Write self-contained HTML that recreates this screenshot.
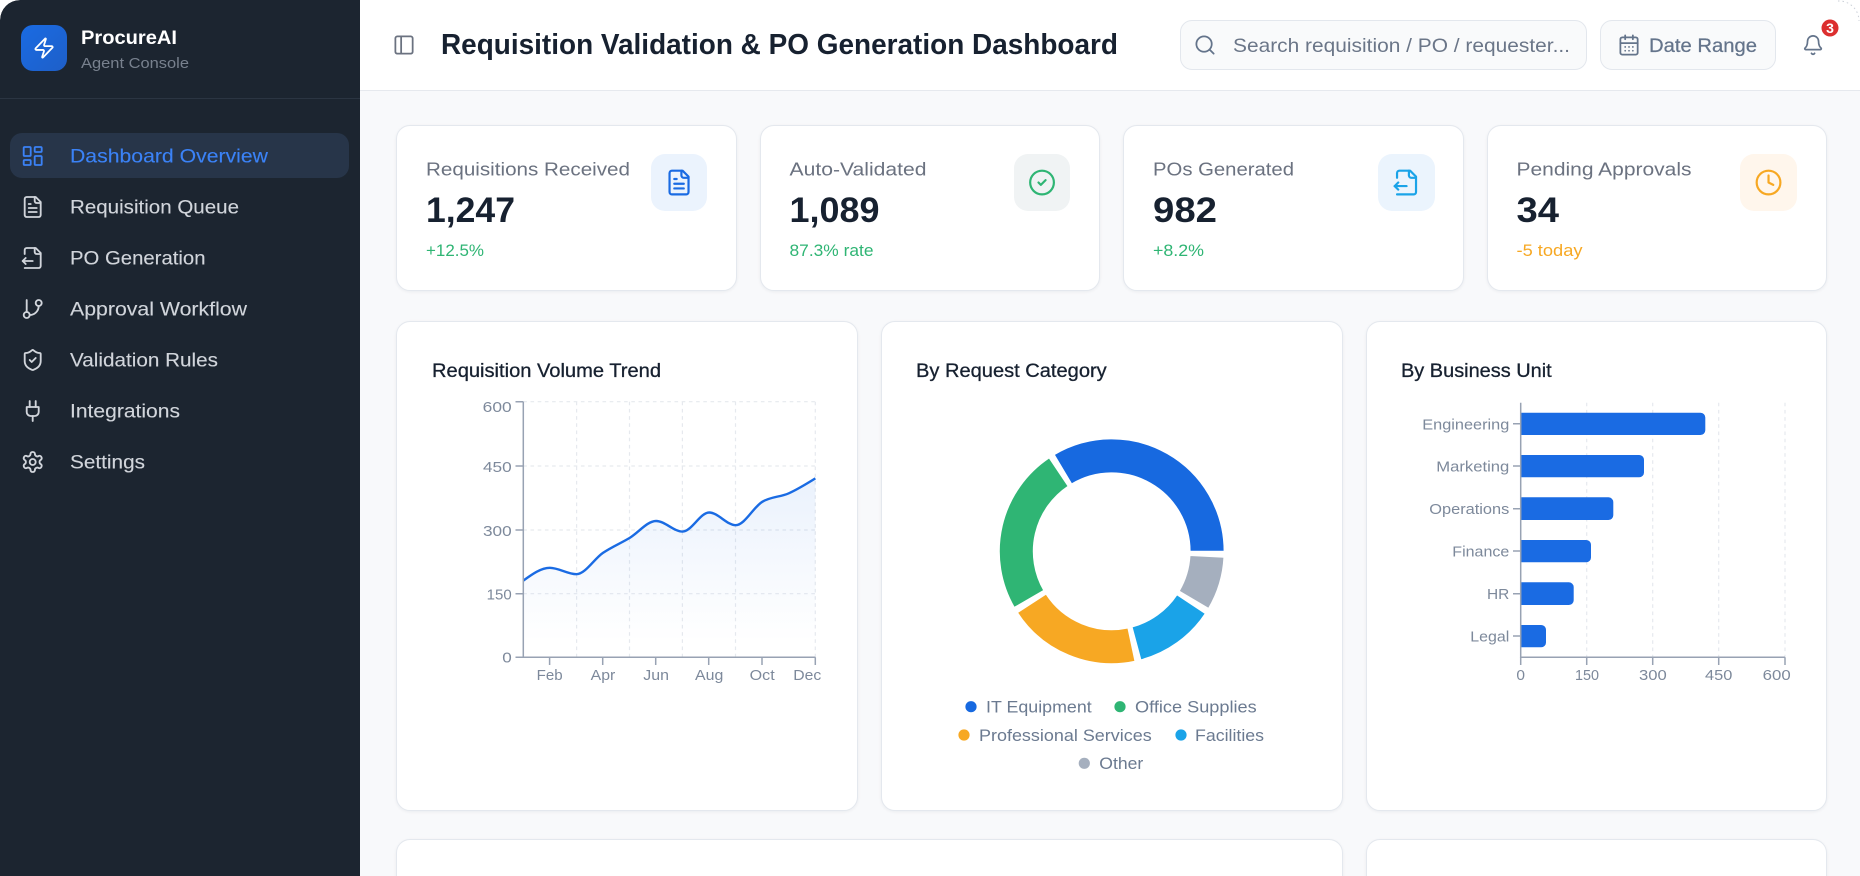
<!DOCTYPE html>
<html lang="en">
<head>
<meta charset="utf-8">
<title>ProcureAI Dashboard</title>
<style>
html,body{margin:0;padding:0;background:#fff}
body{width:1860px;height:876px;overflow:hidden;position:relative;font-family:"Liberation Sans",sans-serif}
.abs{position:absolute}
#main{left:0;top:0;width:1860px;height:876px;background:#f8f9fb;border-radius:20px 20px 0 0;overflow:hidden;filter:blur(.35px)}
#side{left:0;top:0;width:360px;height:876px;background:#1c2530;border-top-left-radius:20px}
#side .rule{position:absolute;left:0;top:98px;width:360px;height:1px;background:#2b3542}
#logo{left:21px;top:25px;width:46px;height:46px;border-radius:12px;background:linear-gradient(135deg,#1a6be3,#1e5fc8)}
#active{left:10px;top:133px;width:339px;height:45px;border-radius:12px;background:#273549}
#head{left:360px;top:0;width:1500px;height:89.5px;background:#fff;border-bottom:1.5px solid #e6e9ee;box-sizing:content-box}
.ctl{border:1.5px solid #e3e7ed;border-radius:12px;background:#f9fafb;box-sizing:border-box}
.card{background:#fff;border:1.5px solid #e4e8ee;border-radius:14px;box-sizing:border-box;box-shadow:0 1px 3px rgba(20,30,50,.06)}
.ib{border-radius:14px}
svg text{font-family:"Liberation Sans",sans-serif}
.ic{fill:none;stroke-width:1.85;stroke-linecap:round;stroke-linejoin:round}
</style>
</head>
<body>
<div id="main" class="abs">
  <div id="head" class="abs"></div>
  <div id="side" class="abs"><div class="rule"></div></div>
  <div id="logo" class="abs"></div>
  <div id="active" class="abs"></div>

  <div class="abs ctl" style="left:1180px;top:20px;width:407px;height:50px"></div>
  <div class="abs ctl" style="left:1600px;top:20px;width:176px;height:50px"></div>

  <div class="abs card" style="left:396px;top:125px;width:340.5px;height:166px"></div>
  <div class="abs card" style="left:760px;top:125px;width:339.5px;height:166px"></div>
  <div class="abs card" style="left:1123px;top:125px;width:340.5px;height:166px"></div>
  <div class="abs card" style="left:1487px;top:125px;width:340px;height:166px"></div>

  <div class="abs ib" style="left:651px;top:154px;width:56px;height:57px;background:#ebf3fd"></div>
  <div class="abs ib" style="left:1014px;top:154px;width:56px;height:57px;background:#f0f3f4"></div>
  <div class="abs ib" style="left:1378px;top:154px;width:57px;height:57px;background:#ebf4fd"></div>
  <div class="abs ib" style="left:1740px;top:154px;width:57px;height:57px;background:#fff6ec"></div>

  <div class="abs card" style="left:396px;top:320.5px;width:461.5px;height:490px"></div>
  <div class="abs card" style="left:881px;top:320.5px;width:461.5px;height:490px"></div>
  <div class="abs card" style="left:1365.5px;top:320.5px;width:461.5px;height:490px"></div>
  <div class="abs card" style="left:396px;top:839px;width:946.5px;height:80px"></div>
  <div class="abs card" style="left:1365.5px;top:839px;width:461.5px;height:80px"></div>

  <svg class="abs" style="left:0;top:0" width="1860" height="876" viewBox="0 0 1860 876" xmlns="http://www.w3.org/2000/svg">
    <defs>
      <linearGradient id="ar" x1="0" y1="478" x2="0" y2="642" gradientUnits="userSpaceOnUse">
        <stop offset="0" stop-color="#1a6be3" stop-opacity=".09"/>
        <stop offset="1" stop-color="#1a6be3" stop-opacity="0"/>
      </linearGradient>
    </defs>

    <path d="M1838 1A20 20 0 0 1 1859 21" fill="none" stroke="#c9ced6" stroke-width="1" stroke-dasharray="1.5 3"/>

    <!-- brand -->
    <g transform="translate(32.5,36.5) scale(.96)" class="ic" stroke="#fff"><path d="M4 14a1 1 0 0 1-.78-1.63l9.9-10.2a.5.5 0 0 1 .86.46l-1.92 6.02A1 1 0 0 0 13 10h7a1 1 0 0 1 .78 1.63l-9.9 10.2a.5.5 0 0 1-.86-.46l1.92-6.02A1 1 0 0 0 11 14z"/></g>
    <text x="81" y="44" font-size="19" font-weight="700" fill="#fff" textLength="96" lengthAdjust="spacingAndGlyphs">ProcureAI</text>
    <text x="81" y="68" font-size="14.5" fill="#78818e" textLength="108" lengthAdjust="spacingAndGlyphs">Agent Console</text>

    <!-- nav icons -->
    <g transform="translate(20.7,144)" class="ic" stroke="#3b82f6"><rect x="3" y="3" width="7" height="9" rx="1"/><rect x="14" y="3" width="7" height="5" rx="1"/><rect x="14" y="12" width="7" height="9" rx="1"/><rect x="3" y="16" width="7" height="5" rx="1"/></g>
    <g transform="translate(20.7,195)" class="ic" stroke="#d1d5db"><path d="M15 2H6a2 2 0 0 0-2 2v16a2 2 0 0 0 2 2h12a2 2 0 0 0 2-2V7Z"/><path d="M14 2v4a2 2 0 0 0 2 2h4"/><path d="M10 9H8"/><path d="M16 13H8"/><path d="M16 17H8"/></g>
    <g transform="translate(20.7,246)" class="ic" stroke="#d1d5db"><path d="M4 22h14a2 2 0 0 0 2-2V7l-5-5H6a2 2 0 0 0-2 2v4"/><path d="M14 2v4a2 2 0 0 0 2 2h4"/><path d="m5 12-3 3 3 3"/><path d="M2 15h10"/></g>
    <g transform="translate(20.7,297)" class="ic" stroke="#d1d5db"><line x1="6" y1="3" x2="6" y2="15"/><circle cx="18" cy="6" r="3"/><circle cx="6" cy="18" r="3"/><path d="M18 9a9 9 0 0 1-9 9"/></g>
    <g transform="translate(20.7,348)" class="ic" stroke="#d1d5db"><path d="M20 13c0 5-3.5 7.5-7.66 8.95a1 1 0 0 1-.67-.01C7.5 20.5 4 18 4 13V6a1 1 0 0 1 1-1c2 0 4.5-1.2 6.24-2.72a1.17 1.17 0 0 1 1.52 0C14.51 3.81 17 5 19 5a1 1 0 0 1 1 1z"/><path d="m9 12 2 2 4-4"/></g>
    <g transform="translate(20.7,399)" class="ic" stroke="#d1d5db"><path d="M12 22v-5"/><path d="M9 8V2"/><path d="M15 8V2"/><path d="M18 8v5a4 4 0 0 1-4 4h-4a4 4 0 0 1-4-4V8Z"/></g>
    <g transform="translate(20.7,450)" class="ic" stroke="#d1d5db"><path d="M12.22 2h-.44a2 2 0 0 0-2 2v.18a2 2 0 0 1-1 1.73l-.43.25a2 2 0 0 1-2 0l-.15-.08a2 2 0 0 0-2.73.73l-.22.38a2 2 0 0 0 .73 2.73l.15.1a2 2 0 0 1 1 1.72v.51a2 2 0 0 1-1 1.74l-.15.09a2 2 0 0 0-.73 2.73l.22.38a2 2 0 0 0 2.73.73l.15-.08a2 2 0 0 1 2 0l.43.25a2 2 0 0 1 1 1.73V20a2 2 0 0 0 2 2h.44a2 2 0 0 0 2-2v-.18a2 2 0 0 1 1-1.73l.43-.25a2 2 0 0 1 2 0l.15.08a2 2 0 0 0 2.73-.73l.22-.39a2 2 0 0 0-.73-2.73l-.15-.08a2 2 0 0 1-1-1.74v-.5a2 2 0 0 1 1-1.74l.15-.09a2 2 0 0 0 .73-2.73l-.22-.38a2 2 0 0 0-2.73-.73l-.15.08a2 2 0 0 1-2 0l-.43-.25a2 2 0 0 1-1-1.73V4a2 2 0 0 0-2-2z"/><circle cx="12" cy="12" r="3"/></g>

    <!-- nav labels -->
    <g font-size="19.5" fill="#d1d5db" stroke="#d1d5db" stroke-width=".12">
      <text x="70" y="162.7" fill="#3b82f6" stroke="#3b82f6" textLength="198" lengthAdjust="spacingAndGlyphs">Dashboard Overview</text>
      <text x="70" y="213.7" textLength="169" lengthAdjust="spacingAndGlyphs">Requisition Queue</text>
      <text x="70" y="264.7" textLength="135.5" lengthAdjust="spacingAndGlyphs">PO Generation</text>
      <text x="70" y="315.7" textLength="177" lengthAdjust="spacingAndGlyphs">Approval Workflow</text>
      <text x="70" y="366.7" textLength="148" lengthAdjust="spacingAndGlyphs">Validation Rules</text>
      <text x="70" y="417.7" textLength="110" lengthAdjust="spacingAndGlyphs">Integrations</text>
      <text x="70" y="468.7" textLength="75" lengthAdjust="spacingAndGlyphs">Settings</text>
    </g>

    <!-- header -->
    <g transform="translate(392.5,33.5) scale(.96)" class="ic" stroke="#6b7280"><rect width="18" height="18" x="3" y="3" rx="2"/><path d="M9 3v18"/></g>
    <text x="441" y="54" font-size="28.5" font-weight="700" fill="#172130" textLength="677" lengthAdjust="spacingAndGlyphs">Requisition Validation &amp; PO Generation Dashboard</text>
    <g transform="translate(1193.5,33.5) scale(.96)" class="ic" stroke="#64748b"><path d="m21 21-4.34-4.34"/><circle cx="11" cy="11" r="8"/></g>
    <text x="1233" y="52" font-size="19.5" fill="#6b7688" textLength="337" lengthAdjust="spacingAndGlyphs">Search requisition / PO / requester...</text>
    <g transform="translate(1617.5,33.5) scale(.96)" class="ic" stroke="#64748b"><path d="M8 2v4"/><path d="M16 2v4"/><rect width="18" height="18" x="3" y="4" rx="2"/><path d="M3 10h18"/><path d="M8 14h.01M12 14h.01M16 14h.01M8 18h.01M12 18h.01M16 18h.01"/></g>
    <text x="1649" y="52" font-size="19.5" fill="#64748b" stroke="#64748b" stroke-width=".25" textLength="108" lengthAdjust="spacingAndGlyphs">Date Range</text>
    <g transform="translate(1802,34) scale(.92)" class="ic" stroke="#64748b"><path d="M10.268 21a2 2 0 0 0 3.464 0"/><path d="M3.262 15.326A1 1 0 0 0 4 17h16a1 1 0 0 0 .74-1.673C19.41 13.956 18 12.499 18 8A6 6 0 0 0 6 8c0 4.499-1.411 5.956-2.738 7.326"/></g>
    <circle cx="1830" cy="28" r="8.5" fill="#dc2f2f"/>
    <text x="1830" y="33" font-size="14" font-weight="700" fill="#fff" text-anchor="middle">3</text>

    <!-- KPI -->
    <g font-size="18.5" fill="#6b7280">
      <text x="426" y="175.5" textLength="204" lengthAdjust="spacingAndGlyphs">Requisitions Received</text>
      <text x="789.5" y="175.5" textLength="137" lengthAdjust="spacingAndGlyphs">Auto-Validated</text>
      <text x="1153" y="175.5" textLength="141" lengthAdjust="spacingAndGlyphs">POs Generated</text>
      <text x="1516.5" y="175.5" textLength="175" lengthAdjust="spacingAndGlyphs">Pending Approvals</text>
    </g>
    <g font-size="35" font-weight="700" fill="#172130">
      <text x="426" y="222" textLength="89" lengthAdjust="spacingAndGlyphs">1,247</text>
      <text x="789.5" y="222" textLength="90" lengthAdjust="spacingAndGlyphs">1,089</text>
      <text x="1153" y="222" textLength="64" lengthAdjust="spacingAndGlyphs">982</text>
      <text x="1516.5" y="222" textLength="42.5" lengthAdjust="spacingAndGlyphs">34</text>
    </g>
    <g font-size="16.6">
      <text x="426" y="256" fill="#2fb574" textLength="58" lengthAdjust="spacingAndGlyphs">+12.5%</text>
      <text x="789.5" y="256" fill="#2fb574" textLength="84" lengthAdjust="spacingAndGlyphs">87.3% rate</text>
      <text x="1153" y="256" fill="#2fb574" textLength="51" lengthAdjust="spacingAndGlyphs">+8.2%</text>
      <text x="1516.5" y="256" fill="#f7a823" textLength="66" lengthAdjust="spacingAndGlyphs">-5 today</text>
    </g>
    <g transform="translate(664.8,168.3) scale(1.186)" class="ic" stroke="#1a6be3"><path d="M15 2H6a2 2 0 0 0-2 2v16a2 2 0 0 0 2 2h12a2 2 0 0 0 2-2V7Z"/><path d="M14 2v4a2 2 0 0 0 2 2h4"/><path d="M10 9H8"/><path d="M16 13H8"/><path d="M16 17H8"/></g>
    <g transform="translate(1027.8,168.3) scale(1.186)" class="ic" stroke="#2fb574"><circle cx="12" cy="12" r="10"/><path d="m9 12 2 2 4-4"/></g>
    <g transform="translate(1392.3,168.3) scale(1.186)" class="ic" stroke="#1aa3e8"><path d="M4 22h14a2 2 0 0 0 2-2V7l-5-5H6a2 2 0 0 0-2 2v4"/><path d="M14 2v4a2 2 0 0 0 2 2h4"/><path d="m5 12-3 3 3 3"/><path d="M2 15h10"/></g>
    <g transform="translate(1754.3,168.3) scale(1.186)" class="ic" stroke="#f7a823"><circle cx="12" cy="12" r="10"/><polyline points="12 6 12 12 16 14"/></g>

    <!-- card titles -->
    <g font-size="19" fill="#172130" stroke="#172130" stroke-width=".3">
      <text x="432" y="377" textLength="229" lengthAdjust="spacingAndGlyphs">Requisition Volume Trend</text>
      <text x="916" y="377" textLength="190.7" lengthAdjust="spacingAndGlyphs">By Request Category</text>
      <text x="1401" y="377" textLength="150.7" lengthAdjust="spacingAndGlyphs">By Business Unit</text>
    </g>

    <!-- line chart -->
    <g stroke="#e6e9ee" stroke-width="1.2" stroke-dasharray="3.6 3.6" fill="none">
      <path d="M523.3 401.7H815.3M523.3 466H815.3M523.3 530H815.3M523.3 593.7H815.3"/>
      <path d="M576.6 401.7V657.3M629.5 401.7V657.3M682.4 401.7V657.3M735.5 401.7V657.3M815.3 401.7V657.3"/>
    </g>
    <path d="M523.3 580.6C532.15 574.2 541 567.8 549.85 567.8C558.7 567.8 567.55 574.2 576.4 574.2C585.25 574.2 594.1 558.93 602.95 552.9C611.8 546.87 620.65 543.32 629.5 538C638.35 532.68 647.2 521 656.05 521C664.9 521 673.75 531.6 682.6 531.6C691.45 531.6 700.3 512.5 709.15 512.5C718 512.5 726.85 525.2 735.7 525.2C744.55 525.2 753.4 507.12 762.25 501.8C771.1 496.48 779.95 497.2 788.8 493.3C797.65 489.4 806.5 483.9 815.35 478.4V657.3H523.3Z" fill="url(#ar)"/>
    <path d="M523.3 580.6C532.15 574.2 541 567.8 549.85 567.8C558.7 567.8 567.55 574.2 576.4 574.2C585.25 574.2 594.1 558.93 602.95 552.9C611.8 546.87 620.65 543.32 629.5 538C638.35 532.68 647.2 521 656.05 521C664.9 521 673.75 531.6 682.6 531.6C691.45 531.6 700.3 512.5 709.15 512.5C718 512.5 726.85 525.2 735.7 525.2C744.55 525.2 753.4 507.12 762.25 501.8C771.1 496.48 779.95 497.2 788.8 493.3C797.65 489.4 806.5 483.9 815.35 478.4" fill="none" stroke="#1a6be3" stroke-width="2.4"/>
    <g stroke="#98a2b3" stroke-width="1.5" fill="none">
      <path d="M523.3 401.7V657.3H815.3"/>
      <path d="M515.5 401.7H523.3M515.5 466H523.3M515.5 530H523.3M515.5 593.7H523.3M515.5 657.3H523.3"/>
      <path d="M549.6 657.3V665M602.7 657.3V665M655.7 657.3V665M708.7 657.3V665M762 657.3V665M815.3 657.3V665"/>
    </g>
    <g font-size="14.8" fill="#7d899b">
      <text x="482.7" y="412" textLength="29" lengthAdjust="spacingAndGlyphs">600</text>
      <text x="483" y="472" textLength="28.7" lengthAdjust="spacingAndGlyphs">450</text>
      <text x="483" y="536" textLength="28.7" lengthAdjust="spacingAndGlyphs">300</text>
      <text x="486.7" y="599.5" textLength="25" lengthAdjust="spacingAndGlyphs">150</text>
      <text x="502.3" y="662.5" textLength="9.5" lengthAdjust="spacingAndGlyphs">0</text>
      <text x="536.7" y="680" textLength="26" lengthAdjust="spacingAndGlyphs">Feb</text>
      <text x="590.7" y="680" textLength="24.6" lengthAdjust="spacingAndGlyphs">Apr</text>
      <text x="643.3" y="680" textLength="25.7" lengthAdjust="spacingAndGlyphs">Jun</text>
      <text x="695" y="680" textLength="28.3" lengthAdjust="spacingAndGlyphs">Aug</text>
      <text x="749.7" y="680" textLength="25" lengthAdjust="spacingAndGlyphs">Oct</text>
      <text x="793.3" y="680" textLength="28" lengthAdjust="spacingAndGlyphs">Dec</text>
    </g>

    <!-- donut -->
    <g transform="translate(1111.7,551.3)" stroke="#fff" stroke-width="1.2">
      <path fill="#1769e0" d="M112.5 0A112.5 112.5 0 0 0 -57.52 -96.68L-40.03 -67.29A78.3 78.3 0 0 1 78.3 0Z"/>
      <path fill="#2fb574" d="M-62.5 -93.54A112.5 112.5 0 0 0 -97.43 56.25L-67.81 39.15A78.3 78.3 0 0 1 -43.5 -65.1Z"/>
      <path fill="#f7a823" d="M-94.35 61.27A112.5 112.5 0 0 0 23.39 110.04L16.28 76.59A78.3 78.3 0 0 1 -65.67 42.64Z"/>
      <path fill="#1aa3e8" d="M29.12 108.66A112.5 112.5 0 0 0 93.7 62.26L65.22 43.33A78.3 78.3 0 0 1 20.26 75.63Z"/>
      <path fill="#a5afbe" d="M96.83 57.26A112.5 112.5 0 0 0 112.34 5.88L78.19 4.09A78.3 78.3 0 0 1 67.39 39.85Z"/>
    </g>
    <circle cx="971" cy="706.7" r="5.6" fill="#1769e0"/>
    <circle cx="1120" cy="706.7" r="5.6" fill="#2fb574"/>
    <circle cx="964" cy="735" r="5.6" fill="#f7a823"/>
    <circle cx="1181" cy="735" r="5.6" fill="#1aa3e8"/>
    <circle cx="1084.3" cy="763.3" r="5.6" fill="#a5afbe"/>
    <g font-size="17" fill="#6b7a90">
      <text x="986" y="712.6" textLength="105.7" lengthAdjust="spacingAndGlyphs">IT Equipment</text>
      <text x="1135" y="712.6" textLength="121.7" lengthAdjust="spacingAndGlyphs">Office Supplies</text>
      <text x="979" y="741" textLength="172.7" lengthAdjust="spacingAndGlyphs">Professional Services</text>
      <text x="1195" y="741" textLength="69" lengthAdjust="spacingAndGlyphs">Facilities</text>
      <text x="1099.3" y="769.2" textLength="44" lengthAdjust="spacingAndGlyphs">Other</text>
    </g>

    <!-- bar chart -->
    <g stroke="#e6e9ee" stroke-width="1.2" stroke-dasharray="3.6 3.6" fill="none">
      <path d="M1586.7 402.7V657.3M1652.7 402.7V657.3M1718.7 402.7V657.3M1785 402.7V657.3"/>
    </g>
    <g fill="#1a6be3">
      <path d="M1520.7 412.7H1700.5a4.8 4.8 0 0 1 4.8 4.8V430.2a4.8 4.8 0 0 1-4.8 4.8H1520.7Z"/>
      <path d="M1520.7 455H1639.2a4.8 4.8 0 0 1 4.8 4.8V472.5a4.8 4.8 0 0 1-4.8 4.8H1520.7Z"/>
      <path d="M1520.7 497.3H1608.5a4.8 4.8 0 0 1 4.8 4.8V515.2a4.8 4.8 0 0 1-4.8 4.8H1520.7Z"/>
      <path d="M1520.7 540H1586.2a4.8 4.8 0 0 1 4.8 4.8V557.5a4.8 4.8 0 0 1-4.8 4.8H1520.7Z"/>
      <path d="M1520.7 582.3H1568.9a4.8 4.8 0 0 1 4.8 4.8V600.2a4.8 4.8 0 0 1-4.8 4.8H1520.7Z"/>
      <path d="M1520.7 625H1541.2a4.8 4.8 0 0 1 4.8 4.8V642.5a4.8 4.8 0 0 1-4.8 4.8H1520.7Z"/>
    </g>
    <g stroke="#98a2b3" stroke-width="1.5" fill="none">
      <path d="M1520.7 402.7V657.3H1785"/>
      <path d="M1513 423.8H1520.7M1513 466H1520.7M1513 508.7H1520.7M1513 551H1520.7M1513 593.7H1520.7M1513 636H1520.7"/>
      <path d="M1520.7 657.3V665M1586.7 657.3V665M1652.7 657.3V665M1718.7 657.3V665M1785 657.3V665"/>
    </g>
    <g font-size="15.2" fill="#7d899b">
      <text x="1422.3" y="429.3" textLength="87" lengthAdjust="spacingAndGlyphs">Engineering</text>
      <text x="1436.3" y="471.5" textLength="73" lengthAdjust="spacingAndGlyphs">Marketing</text>
      <text x="1429.3" y="514" textLength="80" lengthAdjust="spacingAndGlyphs">Operations</text>
      <text x="1452.3" y="556.5" textLength="57" lengthAdjust="spacingAndGlyphs">Finance</text>
      <text x="1487" y="599" textLength="22.3" lengthAdjust="spacingAndGlyphs">HR</text>
      <text x="1470.3" y="641.5" textLength="39" lengthAdjust="spacingAndGlyphs">Legal</text>
      <text x="1516.4" y="680" textLength="8.6" lengthAdjust="spacingAndGlyphs">0</text>
      <text x="1575" y="680" textLength="24" lengthAdjust="spacingAndGlyphs">150</text>
      <text x="1639" y="680" textLength="27.7" lengthAdjust="spacingAndGlyphs">300</text>
      <text x="1705" y="680" textLength="27.3" lengthAdjust="spacingAndGlyphs">450</text>
      <text x="1762.7" y="680" textLength="28" lengthAdjust="spacingAndGlyphs">600</text>
    </g>
  </svg>
</div>
</body>
</html>
